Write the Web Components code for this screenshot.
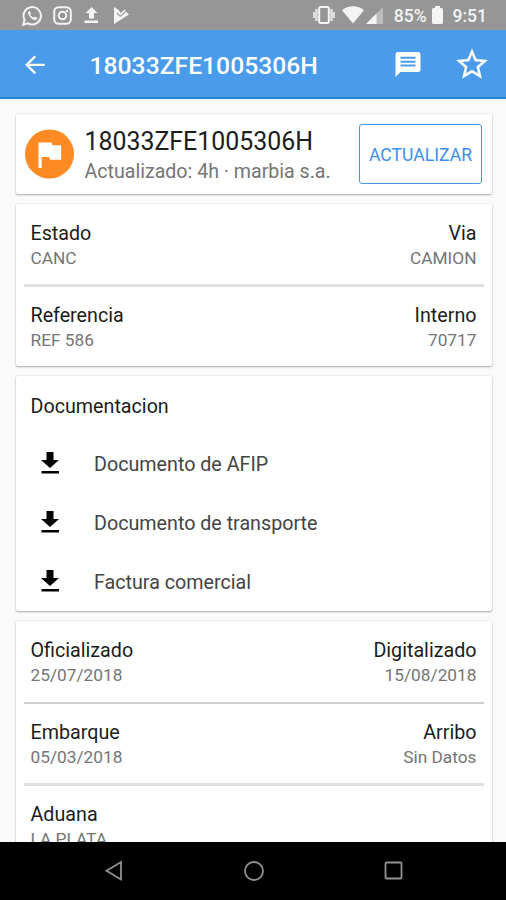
<!DOCTYPE html>
<html lang="es">
<head>
<meta charset="utf-8">
<title>18033ZFE1005306H</title>
<style>
  html, body {
    margin: 0;
    height: 100%;
    overflow: hidden;
  }
  body {
    display: flex;
    flex-direction: column;
    height: 900px;
    width: 506px;
    background: #fafafa;
    color: #1c1c1c;
    font-family: Roboto, "Liberation Sans", sans-serif;
  }
  main {
    flex: 1;
    min-height: 0;
    overflow: hidden;
    display: flex;
    flex-direction: column;
    gap: 10px;
    padding: 15px 14.5px 0 15.5px;
  }
</style>
</head>
<body>
  <uc-status-bar battery="85%" time="9:51"></uc-status-bar>
  <uc-app-bar>18033ZFE1005306H</uc-app-bar>
  <main>
    <uc-card style="height: 80px">
      <uc-summary>
        <span slot="title">18033ZFE1005306H</span>
        <span slot="subtitle">Actualizado: 4h · marbia s.a.</span>
        <span slot="action">ACTUALIZAR</span>
      </uc-summary>
    </uc-card>
    <uc-card style="height: 162px">
      <uc-row label="Estado" value="CANC" end-label="Via" end-value="CAMION" style="--line: 3px; --line-color: #e0e0e0"></uc-row>
      <uc-row label="Referencia" value="REF 586" end-label="Interno" end-value="70717" style="--line: 0px"></uc-row>
    </uc-card>
    <uc-card style="height: 235px">
      <uc-documents>
        <span slot="heading">Documentacion</span>
        <uc-document>Documento de AFIP</uc-document>
        <uc-document>Documento de transporte</uc-document>
        <uc-document>Factura comercial</uc-document>
      </uc-documents>
    </uc-card>
    <uc-card style="height: 260px">
      <uc-row label="Oficializado" value="25/07/2018" end-label="Digitalizado" end-value="15/08/2018"></uc-row>
      <uc-row label="Embarque" value="05/03/2018" end-label="Arribo" end-value="Sin Datos" style="--line: 3px; --line-color: #dfdfdf"></uc-row>
      <uc-row label="Aduana" value="LA PLATA" style="--line: 0px"></uc-row>
    </uc-card>
  </main>
  <uc-nav-bar></uc-nav-bar>

<script>
class StatusBar extends HTMLElement {
  constructor() {
    super();
    this.attachShadow({ mode: 'open' });
    this.shadowRoot.innerHTML = `
      <style>
        :host {
          display: flex;
          flex: none;
          align-items: center;
          height: 30px;
          box-sizing: border-box;
          padding: 0 19px 0 22px;
          background: #969696;
          color: #f4f4f4;
          font-size: 17.500px;
          font-weight: 500;
        }
        svg { display: block; fill: #f4f4f4; flex: none; }
        .left { display: flex; align-items: center; gap: 10px; flex: 1; }
        .right { display: flex; align-items: center; }
        span { line-height: 30px; padding-top: 2px; }
      </style>
      <div class="left">
        <svg width="21" height="21" viewBox="0 0 21 21">
          <path d="M1.2 19.8 2.6 15A8.7 8.7 0 1 1 6 18.4Z" fill="none" stroke="#f4f4f4" stroke-width="2"/>
          <path d="M7.4 5.8c-1.6.8-1.8 2.500-.6 4.500 1.400 2.300 3.300 4 5.500 4.700 1.600.4 3-.6 3-2.200l-2.500-1.400-1.200 1.300c-1.600-.7-2.700-1.800-3.500-3.200l1-1.200z"/>
        </svg>
        <svg width="19" height="19" viewBox="0 0 19 19">
          <rect x="1.200" y="1.200" width="16.600" height="16.600" rx="4.500" fill="none" stroke="#f4f4f4" stroke-width="2"/>
          <circle cx="9.500" cy="9.500" r="3.800" fill="none" stroke="#f4f4f4" stroke-width="2"/>
          <circle cx="14" cy="5" r="1.200"/>
        </svg>
        <svg width="19" height="18" viewBox="0 0 19 18">
          <path d="M9.500 1 15.500 7H12v5.500H7V7H3.500ZM2.500 14.500h13.500v2.500H2.500Z"/>
        </svg>
        <svg width="18" height="19" viewBox="0 0 18 19">
          <path d="M3 1 8 4.300 9.500 7 14 3.500 15.500 6 18 8.500 3 18Z"/>
          <path d="m6 7 3.200 3.300L16 4.500" fill="none" stroke="#969696" stroke-width="1.100"/>
        </svg>
      </div>
      <div class="right">
        <svg width="22" height="20" viewBox="0 0 22 20">
          <rect x="6.200" y="2" width="9.600" height="16" rx="1.500" fill="none" stroke="#f4f4f4" stroke-width="2"/>
          <path d="M2.200 4h2.600v12H2.200ZM17.200 4h2.600v12h-2.600ZM0 7h2.200v6H0ZM19.800 7H22v6h-2.200Z" opacity=".75"/>
        </svg>
        <svg width="22" height="18" viewBox="0 0 22 18" style="margin-left: 7px">
          <path d="M0 4.300a17 17 0 0 1 22 0L11 17.500Z"/>
        </svg>
        <svg width="18" height="17" viewBox="0 0 18 17" style="margin: 0 10px 0 2px">
          <path d="M17 0v17H0Z" opacity=".4"/>
          <path d="M10.500 6.500V17H0Z"/>
        </svg>
        <span id="battery"></span>
        <svg width="11" height="18" viewBox="0 0 11 18" style="margin: 0 10px 0 5px">
          <path d="M3 0h5v2h1.500q1.500 0 1.500 1.500v13q0 1.500-1.500 1.500h-8Q0 18 0 16.500v-13Q0 2 1.500 2H3Z"/>
        </svg>
        <span id="time"></span>
      </div>
    `;
  }
  connectedCallback() {
    this.shadowRoot.querySelector('#battery').textContent = this.getAttribute('battery');
    this.shadowRoot.querySelector('#time').textContent = this.getAttribute('time');
  }
}

class AppBar extends HTMLElement {
  constructor() {
    super();
    this.attachShadow({ mode: 'open' });
    this.shadowRoot.innerHTML = `
      <style>
        :host {
          display: flex;
          flex: none;
          align-items: center;
          box-sizing: border-box;
          height: 69px;
          padding: 2px 18px 0 25px;
          background: #4a9bea;
          border-bottom: 2px solid #2485d8;
          color: #fff;
          font-size: 24.7px;
          font-weight: 500;
        }
        svg { display: block; flex: none; fill: #fff; }
        .title { flex: 1; padding: 2px 0 0 44.500px; }
      </style>
      <svg width="20" height="20" viewBox="0 0 20 20">
        <path d="M10.300 1.200 1.700 9.800l8.600 8.600M2 9.800h17.700" fill="none" stroke="#fff" stroke-width="2.300"/>
      </svg>
      <div class="title"><slot></slot></div>
      <svg width="26" height="25" viewBox="0 0 26 26">
        <path fill-rule="evenodd" d="M2.600 0h20.800Q26 0 26 2.600v15.600q0 2.600-2.600 2.600H5.200L0 26V2.600Q0 0 2.600 0ZM5.200 4.900v2.100h15.600V4.900ZM5.200 9v2.100h15.600V9ZM5.200 13.100v2.100h15.600v-2.100Z"/>
      </svg>
      <svg width="32" height="31" viewBox="2 2 20 19" style="margin: -2px 0 0 35px">
        <path d="M22 9.240l-7.190-.62L12 2 9.190 8.630 2 9.240l5.460 4.730L5.820 21 12 17.270 18.180 21l-1.630-7.030L22 9.240zM12 15.400l-3.760 2.270 1-4.280-3.320-2.880 4.380-.38L12 6.100l1.710 4.040 4.380.38-3.320 2.880 1 4.280L12 15.400z"/>
      </svg>
    `;
  }
}

class Card extends HTMLElement {
  constructor() {
    super();
    this.attachShadow({ mode: 'open' });
    this.shadowRoot.innerHTML = `
      <style>
        :host {
          display: block;
          flex: none;
          background: #fff;
          border-radius: 2px;
          box-shadow: 0 1px 2px rgba(0, 0, 0, .3), 0 0 2px rgba(0, 0, 0, .12);
        }
      </style>
      <slot></slot>
    `;
  }
}

class Summary extends HTMLElement {
  constructor() {
    super();
    this.attachShadow({ mode: 'open' });
    this.shadowRoot.innerHTML = `
      <style>
        :host {
          display: flex;
          align-items: center;
          height: 80px;
          padding: 0 9.5px;
        }
        svg { flex: none; }
        .text { flex: 1; padding: 4px 0 0 10.500px; white-space: nowrap; }
        .title { font-size: 24.900px; line-height: 30px; }
        .subtitle { font-size: 19.600px; line-height: 29px; color: #757575; }
        button {
          flex: none;
          width: 123px;
          height: 60px;
          padding: 2px 0 0;
          border: 1.500px solid #4a93e6;
          border-radius: 3px;
          background: #fff;
          color: #3b8eea;
          font: 17.600px Roboto, sans-serif;
        }
      </style>
      <svg width="49" height="50" viewBox="0 0 49 50">
        <circle cx="24.500" cy="25" r="24.500" fill="#fd8a22"/>
        <path d="M13.500 13.500h13l1 2.700h8.700v14.500H25l-1-2.800h-7.300v11.100h-3.200Z" fill="#fff"/>
      </svg>
      <div class="text">
        <div class="title"><slot name="title"></slot></div>
        <div class="subtitle"><slot name="subtitle"></slot></div>
      </div>
      <button><slot name="action"></slot></button>
    `;
  }
}

// Row with a label/value pair on the left and, optionally, another on the right
class Row extends HTMLElement {
  constructor() {
    super();
    this.attachShadow({ mode: 'open' });
    this.shadowRoot.innerHTML = `
      <style>
        :host {
          display: flex;
          justify-content: space-between;
          box-sizing: border-box;
          height: 83px;
          margin: 0 8px -1px;
          padding: 16px 7px 0;
          border-bottom: var(--line, 2px) solid var(--line-color, #cfcfcf);
        }
        .end { text-align: right; }
        .label { font-size: 19.700px; line-height: 27px; }
        .value { font-size: 17.300px; line-height: 22.500px; color: #757575; }
      </style>
      <div>
        <div class="label" id="label"></div>
        <div class="value" id="value"></div>
      </div>
      <div class="end">
        <div class="label" id="end-label"></div>
        <div class="value" id="end-value"></div>
      </div>
    `;
  }
  connectedCallback() {
    ['label', 'value', 'end-label', 'end-value'].forEach(name => {
      if (this.hasAttribute(name)) {
        this.shadowRoot.getElementById(name).textContent = this.getAttribute(name);
      }
    });
  }
}

class Documents extends HTMLElement {
  constructor() {
    super();
    this.attachShadow({ mode: 'open' });
    this.shadowRoot.innerHTML = `
      <style>
        :host { display: block; padding: 0 15px; }
        .heading { height: 58px; line-height: 62px; font-size: 19.700px; }
      </style>
      <div class="heading"><slot name="heading"></slot></div>
      <slot></slot>
    `;
  }
}

class DocumentItem extends HTMLElement {
  constructor() {
    super();
    this.attachShadow({ mode: 'open' });
    this.shadowRoot.innerHTML = `
      <style>
        :host {
          display: flex;
          align-items: center;
          gap: 35px;
          height: 59px;
          padding-left: 10px;
          font-size: 19.700px;
          color: #444;
        }
        svg { margin-top: -2px; }
        div { padding-top: 2px; }
      </style>
      <svg width="18.500" height="22" viewBox="0 0 18.500 22">
        <path d="M5.500 0h7v8H18L9 16 0 8H5.500ZM.5 19h17.500v2.500H.5Z"/>
      </svg>
      <div><slot></slot></div>
    `;
  }
}

class NavBar extends HTMLElement {
  constructor() {
    super();
    this.attachShadow({ mode: 'open' });
    this.shadowRoot.innerHTML = `
      <style>
        :host {
          display: flex;
          flex: none;
          align-items: center;
          justify-content: space-between;
          box-sizing: border-box;
          height: 58px;
          padding: 0 102px 0 103.500px;
          background: #000;
        }
        svg { fill: none; stroke: #919191; stroke-width: 1.800; }
      </style>
      <svg width="20" height="22" viewBox="0 0 20 22"><path d="M17 2v17.500L2.500 10.700Z"/></svg>
      <svg width="22" height="22" viewBox="0 0 22 22"><circle cx="11" cy="11" r="9"/></svg>
      <svg width="20" height="20" viewBox="0 0 20 20"><rect x="1.500" y="1.500" width="16" height="16" rx="1"/></svg>
    `;
  }
}

customElements.define('uc-status-bar', StatusBar);
customElements.define('uc-app-bar', AppBar);
customElements.define('uc-card', Card);
customElements.define('uc-summary', Summary);
customElements.define('uc-row', Row);
customElements.define('uc-documents', Documents);
customElements.define('uc-document', DocumentItem);
customElements.define('uc-nav-bar', NavBar);
</script>
</body>
</html>
